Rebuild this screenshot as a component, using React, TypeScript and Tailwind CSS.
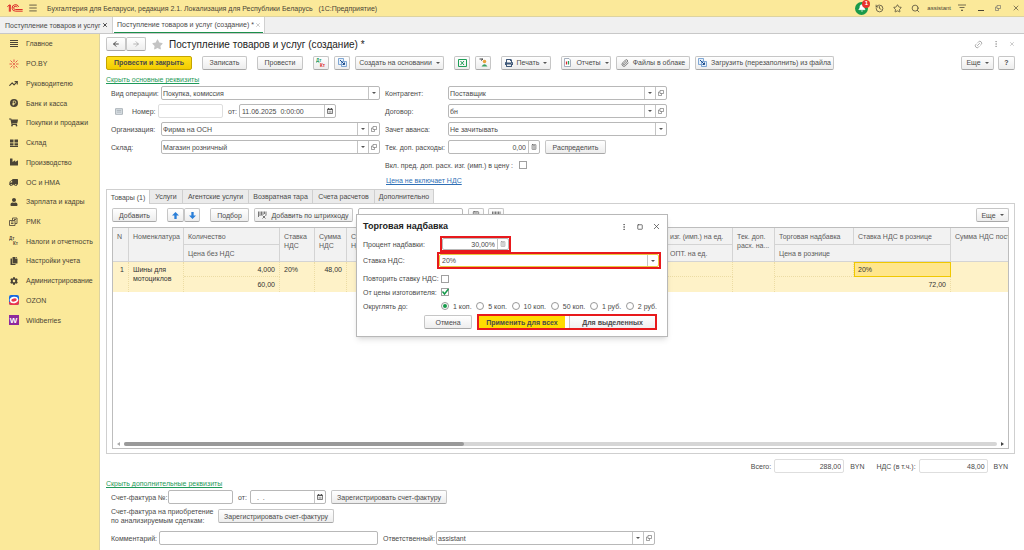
import type { ReactNode } from 'react';
import clsx from 'clsx';
import {
  ArrowLeft,
  ArrowRight,
  Bell,
  Calculator,
  EllipsisVertical,
  History,
  Link2,
  Menu,
  Paperclip,
  Search,
  Square,
  Star,
  TrendingUp,
  X,
} from 'lucide-react';
import {
  FaCog,
  FaCopy,
  FaIndustry,
  FaPrint,
  FaShoppingCart,
  FaStar,
  FaTruck,
  FaUser,
} from 'react-icons/fa';

function LogoIcon() {
  return (
    <svg viewBox="0 0 48 24" className="h-2 w-4" fill="none" stroke="#dd2a2a" strokeWidth="3">
      <path d="M1 8L7 3V23M7 3H10V23" />
      <path d="M35 9A10 9.800 0 1 0 26 21.500H47" />
      <path d="M30 10A5 5 0 1 0 26 16.500H47" />
    </svg>
  );
}

function DtKtIcon({ mono = false }: { mono?: boolean }) {
  const top = mono ? '#5a5040' : '#2a9d5c';
  const bottom = mono ? '#5a5040' : '#d8232a';
  return (
    <svg viewBox="0 0 20 20" className="h-[10px] w-[10px]" fontFamily="Liberation Sans, sans-serif" fontWeight="bold" fontSize="9">
      <text x="0" y="8" fill={top}>Дт</text>
      <text x="8" y="18" fill={bottom}>Кт</text>
    </svg>
  );
}

function ListIcon() {
  return (
    <svg viewBox="0 0 8 8" className="h-2 w-2" stroke="#4a4436" strokeWidth="1">
      <path d="M0 .5H8M0 2.500H8M0 4.500H8M0 6.500H8" />
    </svg>
  );
}

function SparkIcon() {
  return (
    <svg viewBox="0 0 20 20" className="h-[10px] w-[10px]" stroke="#e0453a" strokeWidth="1.800" fill="#e0453a">
      <path d="M10 6V1M13 7L17 3M14 10H19M13 13L17 17M10 14V19M7 13L3 17M6 10H1M7 7L3 3" />
      <circle cx="10" cy="10" r="1.800" stroke="none" />
    </svg>
  );
}

function CoinIcon() {
  return (
    <svg viewBox="0 0 16 16" className="h-2 w-2">
      <circle cx="8" cy="8" r="8" fill="#4a4436" />
      <path d="M6.500 13V4H9A2.400 2.400 0 0 1 9 9H5M5 11H9" stroke="#fbe99a" strokeWidth="1.500" fill="none" />
    </svg>
  );
}

function BoxesIcon() {
  return (
    <svg viewBox="0 0 16 16" className="h-2 w-2" fill="#4a4436">
      <path d="M0 1H7V7H0ZM9 1H16V7H9ZM0 8.500H7V13H0ZM9 8.500H16V13H9ZM0 14H16V16H0Z" />
    </svg>
  );
}

function RegisterIcon() {
  return (
    <svg viewBox="0 0 18 18" className="h-[9px] w-[9px]" fill="none" stroke="#5a5040" strokeWidth="1.800">
      <path d="M1 7H12V17H1ZM4 10H9M4 13H9M7 7V2H16V13H12M10 5H14" />
    </svg>
  );
}

function OzonIcon() {
  return (
    <svg viewBox="0 0 20 20" className="h-[10px] w-[10px]">
      <rect width="20" height="20" rx="4" fill="#1769e0" />
      <path d="M0 14L20 9V16Q20 20 16 20H4Q0 20 0 16Z" fill="#e8364e" />
      <ellipse cx="10" cy="10" rx="8.500" ry="6.500" fill="#fff" transform="rotate(-12 10 10)" />
      <ellipse cx="10" cy="10" rx="5.500" ry="3.200" fill="#e8364e" transform="rotate(-12 10 10)" />
    </svg>
  );
}

function ExcelIcon() {
  return (
    <svg viewBox="0 0 18 16" className="h-2 w-[9px]" fill="none" stroke="#1e9e57" strokeWidth="2">
      <path d="M1 1H17V15H1ZM5 4L12 12M12 4L5 12" />
    </svg>
  );
}

function PageIcon({ bars = false }: { bars?: boolean }) {
  return (
    <svg viewBox="0 0 18 18" className="h-[9px] w-[9px]" fill="none" strokeWidth="1.500">
      {bars ? (
        <>
          <path d="M3 1H12L15 4V17H3Z" fill="#fff" stroke="#8896a8" />
          <path d="M7 7V13" stroke="#d8232a" strokeWidth="2.500" />
          <path d="M11 6V13" stroke="#2a9d5c" strokeWidth="2.500" />
        </>
      ) : (
        <>
          <path d="M1 1H11V13H1Z" fill="#e6effa" stroke="#5b8fc8" />
          <path d="M7 7H17V17H7Z" fill="#e6effa" stroke="#5b8fc8" />
          <path d="M4 4L13 13M13 9V13H9" stroke="#1f4e8c" strokeWidth="2" />
        </>
      )}
    </svg>
  );
}

function PersonIcon() {
  return (
    <svg viewBox="0 0 18 18" className="h-[9px] w-[9px]" fill="none">
      <path d="M1 2H8M4 5L8 2" stroke="#444" strokeWidth="2" />
      <circle cx="11" cy="7" r="3.500" fill="#e8a13a" />
      <path d="M5 17Q11 8 17 17Z" fill="#3b9f60" />
    </svg>
  );
}

function BarcodeIcon() {
  return (
    <svg viewBox="0 0 18 16" className="h-2 w-[9px]" stroke="#555" strokeWidth="1.600" fill="none">
      <path d="M1 1V12M4 1V10M7 1V9M10 1V8M13 1V6M16 1V9M9 9L15 15M15 9L9 15" />
    </svg>
  );
}

function BlueArrow({ down = false }: { down?: boolean }) {
  return (
    <svg viewBox="0 0 12 12" className={clsx('h-[7px] w-[7px]', down && 'rotate-180')} fill="#2b7fd8">
      <path d="M6 0L12 6H8V12H4V6H0Z" />
    </svg>
  );
}

function CalendarIcon() {
  return (
    <svg viewBox="0 0 12 12" className="h-[6px] w-[6px]" fill="none" stroke="#555">
      <path d="M1 2H11V11H1Z" strokeWidth="1.500" />
      <path d="M1 3H11M3 0V3M9 0V3" strokeWidth="2" />
      <path d="M3 6.500H9M3 8.500H9" />
    </svg>
  );
}

function OpenIcon() {
  return (
    <svg viewBox="0 0 12 12" className="h-[6px] w-[6px]" fill="none" stroke="#666" strokeWidth="1.200">
      <path d="M4 1H11V7H4ZM4 4H1V11H7V7" />
    </svg>
  );
}

function Caret() {
  return (
    <svg viewBox="0 0 8 4" className="h-[2px] w-1 shrink-0" fill="#555">
      <path d="M0 0H8L4 4Z" />
    </svg>
  );
}

const iconBtn = 'w-4 px-0';

function Button({ children, className = 'px-2' }: { children: ReactNode; className?: string }) {
  return (
    <button
      type="button"
      className={clsx(
        'flex h-[14px] shrink-0 items-center justify-center gap-1 rounded-xs border border-[#c6c6c6] border-b-[#a8a8a8] bg-linear-to-b from-white to-[#ededed] whitespace-nowrap',
        className,
      )}
    >
      {children}
    </button>
  );
}

interface FieldProps {
  id: string;
  value?: string;
  className?: string;
  height?: string;
  align?: 'left' | 'right';
  faint?: boolean;
  addon?: ReactNode;
}

function Field({ id, value = '', className, height = 'h-[14px]', align = 'left', faint, addon }: FieldProps) {
  return (
    <div
      className={clsx(
        'flex shrink-0 rounded-xs border bg-white',
        faint ? 'border-[#dedede]' : 'border-[#b8b8b8]',
        height,
        className,
      )}
    >
      <input
        id={id}
        aria-label={id}
        defaultValue={value}
        className={clsx('w-full min-w-0 bg-transparent px-[2px] outline-none', align === 'right' && 'text-right')}
      />
      {addon && (
        <span className="flex w-[11px] shrink-0 items-center justify-center border-l border-[#c4c4c4]">{addon}</span>
      )}
    </div>
  );
}

interface ComboProps {
  id: string;
  value: string;
  className?: string;
  height?: string;
  border?: string;
  open?: boolean;
}

function Combo({ id, value, className, height = 'h-[14px]', border = 'border-[#b8b8b8]', open }: ComboProps) {
  return (
    <div className={clsx('flex shrink-0 rounded-xs border bg-white', height, border, className)}>
      <select id={id} aria-label={id} className="w-full min-w-0 appearance-none bg-transparent px-px outline-none">
        <option>{value}</option>
      </select>
      <span className="flex w-[11px] shrink-0 items-center justify-center border-l border-[#c4c4c4]">
        <Caret />
      </span>
      {open && (
        <button
          type="button"
          aria-label="Открыть"
          className="flex w-[11px] shrink-0 items-center justify-center border-l border-[#c4c4c4]"
        >
          <OpenIcon />
        </button>
      )}
    </div>
  );
}

const navItems: { label: string; icon: ReactNode }[] = [
  { label: 'Главное', icon: <ListIcon /> },
  { label: 'PO.BY', icon: <SparkIcon /> },
  { label: 'Руководителю', icon: <TrendingUp size={9} strokeWidth={3} /> },
  { label: 'Банк и касса', icon: <CoinIcon /> },
  { label: 'Покупки и продажи', icon: <FaShoppingCart size={9} /> },
  { label: 'Склад', icon: <BoxesIcon /> },
  { label: 'Производство', icon: <FaIndustry size={8} /> },
  { label: 'ОС и НМА', icon: <FaTruck size={9} className="-scale-x-100" /> },
  { label: 'Зарплата и кадры', icon: <FaUser size={8} /> },
  { label: 'РМК', icon: <RegisterIcon /> },
  { label: 'Налоги и отчетность', icon: <DtKtIcon mono /> },
  { label: 'Настройки учета', icon: <FaCopy size={8} /> },
  { label: 'Администрирование', icon: <FaCog size={8} /> },
  { label: 'OZON', icon: <OzonIcon /> },
  {
    label: 'Wildberries',
    icon: (
      <span className="flex h-[10px] w-[10px] items-center justify-center bg-[#8e2a9c] text-[8px] font-bold text-white">
        W
      </span>
    ),
  },
];

function TopBar() {
  return (
    <header className="flex h-[17px] shrink-0 items-center border-b border-[#ddd3a0] bg-[#fbe99a] pr-1 pl-[7px] text-[#4a4436]">
      <LogoIcon />
      <Menu size={10} strokeWidth={2} className="mr-[9px] ml-[5px]" />
      <span className="grow whitespace-pre">
        Бухгалтерия для Беларуси, редакция 2.1. Локализация для Республики Беларусь{'   '}(1С:Предприятие)
      </span>
      <button
        type="button"
        aria-label="Уведомления"
        className="relative mr-[7px] flex h-[13px] w-[13px] items-center justify-center rounded-full bg-[#1a9a4a] text-white"
      >
        <Bell size={8} fill="currentColor" />
        <span className="absolute -top-[2px] -right-[2px] flex h-2 w-2 items-center justify-center rounded-full bg-[#e8322a] text-[6px] font-bold">
          1
        </span>
      </button>
      <div className="flex items-center gap-[9px]">
        <History size={9} />
        <Star size={9} />
        <Search size={9} />
      </div>
      <span className="mr-[7px] ml-[7px] text-[6px]">assistant</span>
      <svg viewBox="0 0 16 16" className="mr-3 h-2 w-2" stroke="#4a4436" strokeWidth="1.500" fill="#4a4436">
        <path d="M0 2H16M3 7H13" />
        <path d="M6 12H10L8 14Z" strokeWidth="1" />
      </svg>
      <div className="flex items-center gap-[11px]">
        <svg viewBox="0 0 12 12" className="h-[6px] w-[6px]" stroke="#4a4436" strokeWidth="2">
          <path d="M0 11H12" />
        </svg>
        <OpenIcon />
        <X size={8} />
      </div>
    </header>
  );
}

function DocTabs() {
  return (
    <div className="flex h-[17px] shrink-0 border-b border-[#c8c8c8] bg-[#f0f0f0]">
      <div className="flex w-[113px] items-center justify-between border-r border-[#d0d0d0] pr-1 pl-[5px] whitespace-nowrap">
        Поступление товаров и услуг <X size={6} strokeWidth={4} />
      </div>
      <div className="flex w-[152px] items-center border-r border-[#d0d0d0] bg-white px-px">
        <div className="flex h-[15px] w-full items-center justify-between border-b border-[#1a8f4a] pr-[2px] pl-[3px] whitespace-nowrap">
          Поступление товаров и услуг (создание) * <X size={6} className="text-[#999]" />
        </div>
      </div>
    </div>
  );
}

function Sidebar() {
  return (
    <aside className="w-[100px] shrink-0 border-r border-[#ddd3a0] bg-[#fbe99a]">
      <nav className="flex h-[296px] flex-col justify-between">
        {navItems.map((item) => (
          <a key={item.label} href="#" className="flex flex-1 items-center gap-[7px] pl-2 whitespace-nowrap text-[#4a4436]">
            <span className="flex w-[11px] shrink-0 items-center justify-center">{item.icon}</span>
            {item.label}
          </a>
        ))}
      </nav>
    </aside>
  );
}

function CommandBar() {
  return (
    <div className="mt-1 flex h-[15px] items-center">
      <button
        type="button"
        className="mr-[10px] h-[14px] w-[86px] shrink-0 rounded-xs border border-[#c4a400] bg-linear-to-b from-[#ffe11a] to-[#f2cc00] font-bold whitespace-nowrap"
      >
        Провести и закрыть
      </button>
      <Button className="mr-[10px] w-[45px]">Записать</Button>
      <Button className="mr-[10px] w-[46px]">Провести</Button>
      <div className="mr-[10px] flex gap-[5px]">
        <Button className={iconBtn}><DtKtIcon /></Button>
        <Button className={iconBtn}><PageIcon /></Button>
        <Button className="w-[89px]">Создать на основании <Caret /></Button>
      </div>
      <div className="mr-[10px] flex gap-[5px]">
        <Button className={iconBtn}><ExcelIcon /></Button>
        <Button className={iconBtn}><PersonIcon /></Button>
      </div>
      <Button className="mr-[10px] w-[50px]"><FaPrint size={8} className="text-[#3f5878]" />Печать <Caret /></Button>
      <div className="flex grow gap-[5px]">
        <Button className="w-[50px]"><PageIcon bars />Отчеты <Caret /></Button>
        <Button className="w-[74px]"><Paperclip size={8} />Файлы в облаке</Button>
        <Button className="w-[139px]"><PageIcon />Загрузить (перезаполнить) из файла</Button>
      </div>
      <div className="flex gap-1">
        <Button className="w-[33px]">Еще <Caret /></Button>
        <Button className="w-[17px] font-bold">?</Button>
      </div>
    </div>
  );
}

function DocumentFields() {
  return (
    <div className="mt-[2px] flex gap-[5px] pl-[5px]">
      <div className="flex flex-col gap-1">
        <div className="flex items-center">
          <label htmlFor="op" className="w-[50px]">Вид операции:</label>
          <Combo id="op" value="Покупка, комиссия" className="w-[219px]" />
        </div>
        <div className="flex items-center">
          <svg viewBox="0 0 14 12" className="mr-[9px] ml-1 h-[7px] w-2" fill="#dfe5ea" stroke="#a0a8b0" strokeWidth="1.500">
            <path d="M1 1H13V11H1ZM3 4H11M3 7H11" />
          </svg>
          <label htmlFor="num" className="w-[26px]">Номер:</label>
          <Field id="num" faint className="w-[65px]" />
          <label htmlFor="date" className="mx-[5px] w-[6px]">от:</label>
          <Field id="date" value="11.06.2025  0:00:00" className="w-[97px]" addon={<CalendarIcon />} />
        </div>
        <div className="flex items-center">
          <label htmlFor="org" className="w-[50px]">Организация:</label>
          <Combo id="org" value="Фирма на ОСН" className="w-[219px]" open />
        </div>
        <div className="flex items-center">
          <label htmlFor="store" className="w-[50px]">Склад:</label>
          <Combo id="store" value="Магазин розничный" className="w-[219px]" open />
        </div>
      </div>
      <div className="flex flex-col gap-1">
        <div className="flex items-center">
          <label htmlFor="partner" className="w-[63px]">Контрагент:</label>
          <Combo id="partner" value="Поставщик" className="w-[219px]" open />
        </div>
        <div className="flex items-center">
          <label htmlFor="contract" className="w-[63px]">Договор:</label>
          <Combo id="contract" value="бн" className="w-[219px]" open />
        </div>
        <div className="flex items-center">
          <label htmlFor="advance" className="w-[63px]">Зачет аванса:</label>
          <Combo id="advance" value="Не зачитывать" className="w-[219px]" />
        </div>
        <div className="flex items-center">
          <label htmlFor="extra" className="w-[63px] whitespace-nowrap">Тек. доп. расходы:</label>
          <Field id="extra" value="0,00" align="right" className="mr-[5px] w-[92px]" addon={<Calculator size={6} />} />
          <Button className="w-[61px]">Распределить</Button>
        </div>
        <div className="flex h-[14px] items-center gap-[6px]">
          <label htmlFor="incl" className="whitespace-nowrap">Вкл. пред. доп. расх. изг. (имп.) в цену :</label>
          <input id="incl" type="checkbox" className="h-2 w-2 appearance-none border border-[#a0a0a0] bg-white" />
        </div>
        <a href="#" className="ml-px self-start text-[#2f6fb5] underline">Цена не включает НДС</a>
      </div>
    </div>
  );
}

const sections = [
  { label: 'Товары (1)', width: 'w-[44px]' },
  { label: 'Услуги', width: 'w-[33px]' },
  { label: 'Агентские услуги', width: 'w-[66px]' },
  { label: 'Возвратная тара', width: 'w-[64px]' },
  { label: 'Счета расчетов', width: 'w-[62px]' },
  { label: 'Дополнительно', width: 'w-[59px]' },
];

const th = 'border-r border-b border-[#d4d4d4] px-1 pt-1 text-left align-top font-normal';
const td = 'border-r border-dotted border-[#ecdca4] px-1 pt-[3px] align-top';

function GoodsTable() {
  return (
    <table className="w-full table-fixed border-separate border-spacing-0">
      <colgroup>
        <col className="w-4" />
        <col className="w-[55px]" />
        <col className="w-[96px]" />
        <col className="w-[35px]" />
        <col className="w-[32px]" />
        <col className="w-[35px]" />
        <col className="w-[284px]" />
        <col className="w-[67px]" />
        <col className="w-[42px]" />
        <col className="w-[79px]" />
        <col className="w-[97px]" />
        <col />
      </colgroup>
      <thead className="bg-[#f2f2f2] text-[#5c5c5c]">
        <tr className="h-[17px]">
          <th rowSpan={2} className={th}>N</th>
          <th rowSpan={2} className={th}>Номенклатура</th>
          <th className={th}>Количество</th>
          <th rowSpan={2} className={th}>Ставка НДС</th>
          <th rowSpan={2} className={th}>Сумма НДС</th>
          <th rowSpan={2} className={th}>Сумма НДС</th>
          <th rowSpan={2} className={th} />
          <th className={clsx(th, 'whitespace-nowrap')}>изг. (имп.) на ед.</th>
          <th rowSpan={2} className={th}>Тек. доп. расх. на...</th>
          <th className={th}>Торговая надбавка</th>
          <th className={th}>Ставка НДС в рознице</th>
          <th rowSpan={2} className="overflow-hidden border-b border-[#d4d4d4] pt-1 pl-1 text-left align-top font-normal whitespace-nowrap">
            Сумма НДС пост
          </th>
        </tr>
        <tr className="h-[17px]">
          <th className={th}>Цена без НДС</th>
          <th className={th}>ОПТ. на ед.</th>
          <th colSpan={2} className={th}>Цена в рознице</th>
        </tr>
      </thead>
      <tbody className="bg-[#fef2c8] text-[#333]">
        <tr className="h-[15px]">
          <td rowSpan={2} className={clsx(td, 'text-right')}>1</td>
          <td rowSpan={2} className={td}>Шины для мотоциклов</td>
          <td className={clsx(td, 'border-b text-right')}>4,000</td>
          <td rowSpan={2} className={td}>20%</td>
          <td rowSpan={2} className={clsx(td, 'text-right')}>48,00</td>
          <td rowSpan={2} className={td} />
          <td rowSpan={2} className={td} />
          <td className={clsx(td, 'border-b')} />
          <td rowSpan={2} className={td} />
          <td className={clsx(td, 'border-b')} />
          <td className="border border-[#f0c800] bg-[#ffe68c] px-[3px] pt-[2px] align-top">20%</td>
          <td rowSpan={2} />
        </tr>
        <tr className="h-[15px]">
          <td className={clsx(td, 'text-right')}>60,00</td>
          <td className={td} />
          <td colSpan={2} className={clsx(td, 'text-right')}>72,00</td>
        </tr>
      </tbody>
    </table>
  );
}

function GoodsPanel() {
  return (
    <section className="mt-1 flex grow flex-col">
      <div className="flex h-[15px] shrink-0" role="tablist">
        {sections.map((tab, i) => (
          <button
            key={tab.label}
            type="button"
            role="tab"
            className={clsx(
              'border-t border-r border-[#cfcfcf] whitespace-nowrap',
              tab.width,
              i === 0 ? 'border-l bg-white' : 'border-b bg-[#ebebeb]',
            )}
          >
            {tab.label}
          </button>
        ))}
        <div className="grow border-b border-[#cfcfcf]" />
      </div>
      <div className="flex grow flex-col border border-t-0 border-[#cfcfcf] px-[5px] pt-[4px] pb-1">
        <div className="mb-[5px] flex items-center">
          <Button className="mr-[10px] w-[45px]">Добавить</Button>
          <div className="mr-[10px] flex">
            <Button className="w-[17px]"><BlueArrow /></Button>
            <Button className="w-4"><BlueArrow down /></Button>
          </div>
          <Button className="mr-[5px] w-[39px]">Подбор</Button>
          <Button className="mr-[5px] w-[99px]"><BarcodeIcon />Добавить по штрихкоду</Button>
          <Field id="find" className="mr-[5px] w-[105px]" />
          <div className="flex grow gap-1">
            <Button className={iconBtn}><Calculator size={8} /></Button>
            <Button className={iconBtn}><BarcodeIcon /></Button>
          </div>
          <Button className="w-[33px]">Еще <Caret /></Button>
        </div>
        <div className="flex grow flex-col justify-between overflow-hidden border border-[#bdbdbd]">
          <GoodsTable />
          <div className="flex h-2 items-center gap-1 px-1">
            <svg viewBox="0 0 6 8" className="h-1 w-[3px]" fill="#aaa"><path d="M6 0V8L0 4Z" /></svg>
            <div className="h-1 grow rounded-full bg-[#d6d6d6]">
              <div className="h-1 w-[39%] rounded-full bg-[#999]" />
            </div>
            <svg viewBox="0 0 6 8" className="h-1 w-[3px]" fill="#444"><path d="M0 0V8L6 4Z" /></svg>
          </div>
        </div>
      </div>
    </section>
  );
}

function Footer() {
  return (
    <footer className="shrink-0">
      <div className="mt-[5px] flex items-center justify-end pr-[7px]">
        <label htmlFor="total" className="mr-[3px]">Всего:</label>
        <Field id="total" value="288,00" align="right" faint className="mr-[6px] w-[70px]" />
        <span className="mr-3">BYN</span>
        <label htmlFor="vat" className="mr-[3px]">НДС (в т.ч.):</label>
        <Field id="vat" value="48,00" align="right" faint className="mr-[6px] w-[69px]" />
        <span>BYN</span>
      </div>
      <a href="#" className="mt-[6px] block w-fit text-[#1f9a5a] underline">Скрыть дополнительные реквизиты</a>
      <div className="mt-[2px] flex items-center pl-[5px]">
        <label htmlFor="invoice" className="w-[57px] whitespace-nowrap">Счет-фактура №:</label>
        <Field id="invoice" className="w-[65px]" />
        <label htmlFor="invdate" className="mx-[5px] w-[7px]">от:</label>
        <Field id="invdate" value="  .  ." className="mr-[5px] w-[76px]" addon={<CalendarIcon />} />
        <Button className="w-[116px]">Зарегистрировать счет-фактуру</Button>
      </div>
      <div className="mt-[3px] flex items-center pl-[5px]">
        <span className="w-[107px] whitespace-nowrap">
          Счет-фактура на приобретение
          <br />
          по анализируемым сделкам:
        </span>
        <Button className="w-[116px]">Зарегистрировать счет-фактуру</Button>
      </div>
      <div className="mt-[6px] mb-[5px] flex items-center pl-[5px]">
        <label htmlFor="comment" className="w-12">Комментарий:</label>
        <Field id="comment" className="mr-[5px] w-[219px]" />
        <label htmlFor="owner" className="w-[53px] whitespace-nowrap">Ответственный:</label>
        <Combo id="owner" value="assistant" className="w-[219px]" open />
      </div>
    </footer>
  );
}

const roundings = ['1 коп.', '5 коп.', '10 коп.', '50 коп.', '1 руб.', '2 руб.'];

function MarkupDialog() {
  return (
    <div
      role="dialog"
      aria-label="Торговая надбавка"
      className="absolute top-[214px] left-[356px] w-[312px] border border-[#b8b8b8] bg-white px-[6px] pt-[5px] pb-[6px] shadow-md"
    >
      <div className="flex h-[13px] items-center">
        <h2 className="grow text-[9px] font-bold text-[#222]">Торговая надбавка</h2>
        <div className="flex items-center gap-[9px]">
          <EllipsisVertical size={8} />
          <Square size={6} strokeWidth={3} />
          <X size={9} />
        </div>
      </div>
      <div className="mt-[3px] flex items-center">
        <label htmlFor="percent" className="w-[77px]">Процент надбавки:</label>
        <div className="border-2 border-[#e8191c]">
          <Field
            id="percent"
            value="30,00%"
            align="right"
            height="h-3"
            className="w-[67px]"
            addon={<Calculator size={6} className="text-[#888]" />}
          />
        </div>
      </div>
      <div className="flex items-center">
        <label htmlFor="rate" className="w-[74px]">Ставка НДС:</label>
        <div className="w-[224px] border-2 border-[#e8191c]">
          <Combo id="rate" value="20%" height="h-[13px]" border="border-[#e8c840]" className="pl-px" />
        </div>
      </div>
      <div className="mt-[3px] flex h-[13px] items-center">
        <label htmlFor="repeat" className="w-[78px] whitespace-nowrap">Повторить ставку НДС:</label>
        <input id="repeat" type="checkbox" className="h-2 w-2 appearance-none border border-[#a0a0a0]" />
      </div>
      <div className="flex h-[14px] items-center">
        <label htmlFor="maker" className="w-[78px] whitespace-nowrap">От цены изготовителя:</label>
        <span className="grid">
          <input id="maker" type="checkbox" defaultChecked className="col-start-1 row-start-1 h-2 w-2 appearance-none border border-[#a0a0a0]" />
          <svg viewBox="0 0 16 16" className="pointer-events-none col-start-1 row-start-1 h-2 w-2" fill="none" stroke="#159a4a" strokeWidth="3">
            <path d="M3 7L7 12L15 2" />
          </svg>
        </span>
      </div>
      <fieldset className="flex h-[14px] items-center">
        <legend className="float-left w-[78px]">Округлять до:</legend>
        <div className="flex grow justify-between pr-1">
          {roundings.map((label, i) => (
            <label key={label} className="flex items-center gap-1 whitespace-nowrap">
              <input
                type="radio"
                name="rounding"
                defaultChecked={i === 0}
                className="h-2 w-2 appearance-none rounded-full border border-[#999] bg-white bg-clip-content p-px checked:bg-[#159a4a]"
              />
              {label}
            </label>
          ))}
        </div>
      </fieldset>
      <div className="mt-px flex items-center justify-end gap-[5px] pr-[4px]">
        <Button className="w-12">Отмена</Button>
        <div className="flex h-4 w-[180px] border-2 border-[#e8191c]">
          <button type="button" className="w-[86px] bg-[#ffdc00] font-bold whitespace-nowrap">Применить для всех</button>
          <button type="button" className="ml-1 grow border-l border-[#c8c8c8] bg-linear-to-b from-white to-[#f0f0f0] font-bold whitespace-nowrap">
            Для выделенных
          </button>
        </div>
      </div>
    </div>
  );
}

export default function App() {
  return (
    <div className="relative flex min-h-screen flex-col bg-white font-['Liberation_Sans',Arial,sans-serif] text-[7px] leading-[9px] text-[#4a4a4a]">
      <TopBar />
      <DocTabs />
      <div className="flex grow">
        <Sidebar />
        <main className="flex min-w-0 grow flex-col pr-[9px] pl-[6px]">
          <div className="mt-[3px] flex h-[14px] items-center">
            <div className="flex">
              <Button className="w-5"><ArrowLeft size={8} strokeWidth={3} /></Button>
              <Button className="w-5"><ArrowRight size={8} className="text-[#999]" /></Button>
            </div>
            <FaStar size={11} className="mx-[6px] text-[#c4c4c4]" />
            <h1 className="grow text-[10px] text-[#222]">Поступление товаров и услуг (создание) *</h1>
            <div className="flex items-center gap-[9px] text-[#999]">
              <Link2 size={9} className="-rotate-45" />
              <EllipsisVertical size={8} />
              <X size={6} />
            </div>
          </div>
          <CommandBar />
          <a href="#" className="mt-[5px] w-fit text-[#1f9a5a] underline">Скрыть основные реквизиты</a>
          <DocumentFields />
          <GoodsPanel />
          <Footer />
        </main>
      </div>
      <MarkupDialog />
    </div>
  );
}
